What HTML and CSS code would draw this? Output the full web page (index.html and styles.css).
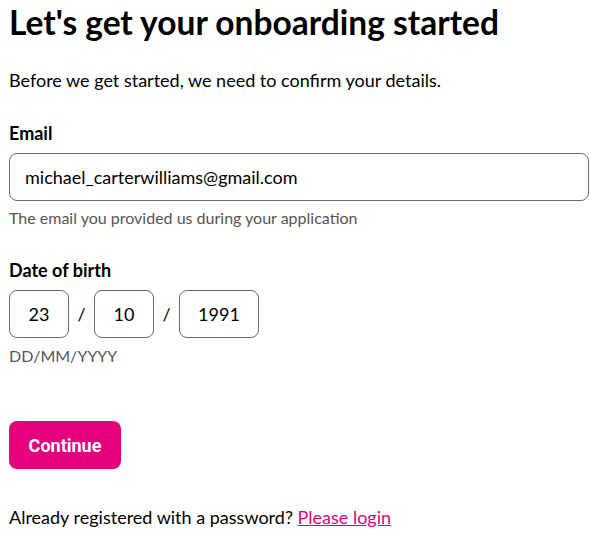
FILE: index.html
```html
<!DOCTYPE html>
<html>
<head>
<meta charset="utf-8">
<link rel="stylesheet" href="styles.css">
</head>
<body>
<main class="page">
  <h1 class="title">Let's get your onboarding started</h1>
  <p class="intro">Before we get started, we need to confirm your details.</p>

  <div class="field">
    <label class="label">Email</label>
    <div class="input email">michael_carterwilliams@gmail.com</div>
    <div class="hint">The email you provided us during your application</div>
  </div>

  <div class="field dob-field">
    <label class="label">Date of birth</label>
    <div class="dob">
      <div class="input box">23</div>
      <span class="slash">/</span>
      <div class="input box">10</div>
      <span class="slash">/</span>
      <div class="input box year">1991</div>
    </div>
    <div class="hint">DD/MM/YYYY</div>
  </div>

  <button class="btn">Continue</button>

  <p class="footer">Already registered with a password? <a class="link" href="#">Please login</a></p>
</main>
</body>
</html>
```
FILE: styles.css
```css
html, body {
  margin: 0;
  padding: 0;
  background: #fff;
}
body {
  font-family: "Lato", "Open Sans", sans-serif;
  color: #000;
}
.page {
  padding: 0 9px;
}
.title {
  margin: 0;
  padding-top: 2px;
  font-size: 33.5px;
  line-height: 40px;
  font-weight: 700;
}
.intro {
  margin: 26px 0 0;
  font-size: 18px;
  line-height: 24px;
}
.field {
  margin-top: 29px;
}
.label {
  display: block;
  font-size: 18px;
  font-weight: 700;
  line-height: 24px;
}
.input {
  box-sizing: border-box;
  border: 1px solid #6b6b6b;
  border-radius: 8px;
  height: 48px;
  display: flex;
  align-items: center;
  font-size: 18px;
}
.email {
  margin-top: 8px;
  padding-left: 15px;
  width: 580px;
}
.hint {
  margin-top: 7px;
  font-size: 16px;
  line-height: 20px;
  color: #555;
}
.dob-field {
  margin-top: 30px;
}
.dob {
  margin-top: 8px;
  display: flex;
  align-items: center;
}
.box {
  width: 60px;
  justify-content: center;
}
.box.year {
  width: 80px;
}
.slash {
  width: 25px;
  text-align: center;
  font-size: 18px;
}
.dob-field .hint {
  margin-top: 8px;
}
.btn {
  margin-top: 55px;
  display: block;
  width: 112px;
  height: 48px;
  border: 0;
  border-radius: 8px;
  background: #e4007c;
  color: #fff;
  font-family: "Roboto", sans-serif;
  font-weight: 700;
  font-size: 18px;
  cursor: pointer;
}
.footer {
  margin: 36px 0 0;
  font-size: 18px;
  line-height: 24px;
}
.link {
  color: #e4007c;
  text-decoration: underline;
}
```
